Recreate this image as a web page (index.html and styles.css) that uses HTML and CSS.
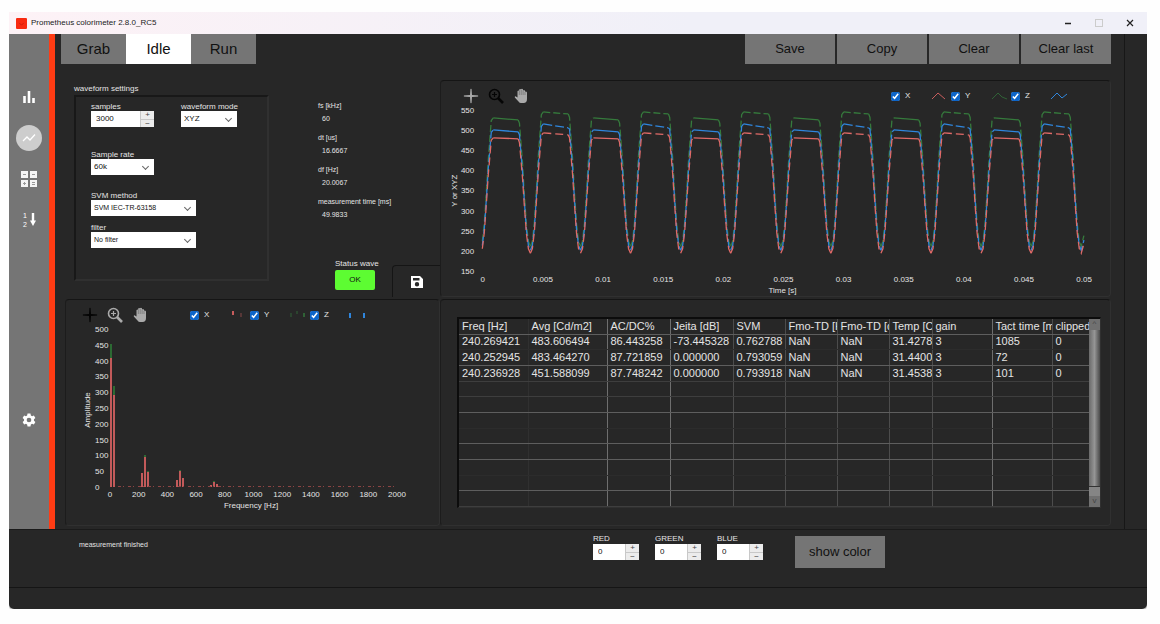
FILE: index.html
```html
<!DOCTYPE html>
<html lang="en">
<head>
<meta charset="utf-8">
<title>Prometheus colorimeter</title>
<link rel="stylesheet" href="styles.css">
</head>
<body>

<!-- shared icons -->
<svg class="defs" aria-hidden="true">
    <symbol id="i-cross" viewBox="0 0 16 16"><path d="M8 0L9 7L16 8L9 9L8 16L7 9L0 8L7 7Z" fill="currentColor"/><path d="M8 1V15M1 8H15" stroke="currentColor"/></symbol>
    <symbol id="i-zoom" viewBox="0 0 16 16"><circle cx="6.5" cy="6.5" r="5" fill="none" stroke="currentColor" stroke-width="1.6"/><path d="M6.5 4V9M4 6.5H9" stroke="currentColor" stroke-width="1.2"/><path d="M10 10L15 15" stroke="currentColor" stroke-width="2.6"/></symbol>
    <symbol id="i-hand" viewBox="0 0 16 16"><path d="M2.500 8.300L4.500 9.500V3.200Q5.300 2 6.200 3V1.600Q7.200 .4 8.100 1.600V1.200Q9.200 .2 10 1.600V2.400Q11.200 1.600 12 2.800V3.800Q13.300 3.200 14 4.400V11Q14 15 10.500 15H8Q6.500 15 5.500 13.500L1.800 9.500Q1.600 8.400 2.500 8.300Z" fill="currentColor"/><path d="M6.300 3V7M8.200 2V7M10.100 2.500V7M12 4V7" stroke="#555" stroke-width=".5"/></symbol>
</svg>

<div class="window">
    <header class="titlebar">
        <svg class="logo" viewBox="0 0 10 10"><rect width="10" height="10" rx="1" fill="#f8290f"/><path d="M3 4.500L5 6.500L7 4.500" fill="none" stroke="#c81a08" stroke-width=".8"/></svg>
        <span class="app-name">Prometheus colorimeter 2.8.0_RC5</span>
        <div class="win-buttons">
            <button aria-label="Minimize"><svg viewBox="0 0 10 10"><path d="M2 5.500H8" stroke="#222" stroke-width="1.400"/></svg></button>
            <button aria-label="Maximize"><svg viewBox="0 0 10 10"><rect x="1.500" y="1.500" width="7" height="7" fill="none" stroke="#ccc"/></svg></button>
            <button aria-label="Close"><svg viewBox="0 0 10 10"><path d="M2 2L8 8M8 2L2 8" stroke="#222" stroke-width="1.200"/></svg></button>
        </div>
    </header>

    <div class="main">
        <nav class="sidebar">
            <button aria-label="Bar view"><svg viewBox="0 0 14 14"><path d="M2.500 6V13M7 1V13M11.500 8V13" stroke="#fff" stroke-width="2.600"/></svg></button>
            <button class="active" aria-label="Waveform view"><svg viewBox="0 0 14 14"><path d="M1 10L5 6L8 9L13 3.500" fill="none" stroke="#fff" stroke-width="1.300"/></svg></button>
            <button aria-label="Calculator view"><svg class="wide" viewBox="0 0 16 16"><path d="M0 0H7V7H0ZM9 0H16V7H9ZM0 9H7V16H0ZM9 9H16V16H9Z" fill="#f4f4f4"/><path d="M2 3.500H5M11 3.500H14M2 12.500H5M3.500 11V14M11 11.500H14M11 13.500H14" stroke="#999" stroke-width="1"/></svg></button>
            <button aria-label="Order view"><svg class="wide" viewBox="0 0 16 16"><text x="2" y="6" class="icon-digit">1</text><text x="2" y="15" class="icon-digit">2</text><path d="M12 1V10" stroke="#fff" stroke-width="2.400"/><path d="M9 8.500H15L12 14Z" fill="#fff"/></svg></button>
            <button class="settings" aria-label="Settings"><svg viewBox="0 0 24 24"><path fill="#fff" fill-rule="evenodd" d="M9.500 1H14.500L15.200 4.200L17.300 5.400L20.400 4.300L22.900 8.700L20.500 10.900V13.100L22.900 15.300L20.400 19.700L17.300 18.600L15.200 19.800L14.500 23H9.500L8.800 19.800L6.700 18.600L3.600 19.700L1.100 15.300L3.500 13.100V10.900L1.100 8.700L3.600 4.300L6.700 5.400L8.800 4.200ZM12 8A4 4 0 1 0 12 16A4 4 0 1 0 12 8Z"/></svg></button>
        </nav>

        <div class="workspace">
            <div class="toolbar">
                <div class="modes">
                    <button>Grab</button>
                    <button class="selected">Idle</button>
                    <button>Run</button>
                </div>
                <div class="actions">
                    <button>Save</button>
                    <button>Copy</button>
                    <button>Clear</button>
                    <button>Clear last</button>
                </div>
            </div>

            <div class="panels">
                <section class="setup">
                    <div class="settings-group">
                        <h2>waveform settings</h2>
                        <form class="settings-box">
                            <div class="field-row">
                                <div class="field samples">
                                    <label for="samples">samples</label>
                                    <div class="spin"><input id="samples" type="text" inputmode="numeric" value="3000"><span class="arrows"><button type="button" aria-label="Up">+</button><button type="button" aria-label="Down">−</button></span></div>
                                </div>
                                <div class="field mode">
                                    <label for="mode">waveform mode</label>
                                    <div class="drop"><select id="mode"><option>XYZ</option></select></div>
                                </div>
                            </div>
                            <div class="field rate">
                                <label for="rate">Sample rate</label>
                                <div class="drop"><select id="rate"><option>60k</option></select></div>
                            </div>
                            <div class="field svm">
                                <label for="svm">SVM method</label>
                                <div class="drop"><select id="svm"><option>SVM IEC-TR-63158</option></select></div>
                            </div>
                            <div class="field filter">
                                <label for="filter">filter</label>
                                <div class="drop"><select id="filter"><option>No filter</option></select></div>
                            </div>
                        </form>
                    </div>
                    <div class="readout">
                        <dl>
                            <dt>fs [kHz]</dt><dd>60</dd>
                            <dt>dt [us]</dt><dd>16.6667</dd>
                            <dt>df [Hz]</dt><dd>20.0067</dd>
                            <dt>measurement time [ms]</dt><dd>49.9833</dd>
                        </dl>
                        <div class="status-row">
                            <div class="status">
                                <span>Status wave</span>
                                <button>OK</button>
                            </div>
                            <button class="disk" aria-label="Save settings"><svg viewBox="0 0 14 14"><path fill="#fff" fill-rule="evenodd" d="M1 1H10L13 4V13H1ZM3 3V5.500H9.500V3ZM7 7A2.200 2.200 0 1 0 7 11.400A2.200 2.200 0 1 0 7 7Z"/></svg></button>
                        </div>
                    </div>
                </section>

                <section class="panel wave-panel">
                    <div class="chart-head">
                        <div class="tools">
                            <button aria-label="Cursor"><svg><use href="#i-cross"/></svg></button>
                            <button class="on" aria-label="Zoom"><svg><use href="#i-zoom"/></svg></button>
                            <button aria-label="Pan"><svg><use href="#i-hand"/></svg></button>
                        </div>
                        <div class="legend">
                            <label><input type="checkbox" checked>X<svg class="x" viewBox="0 0 18 10"><path d="M2 8L8 2L15 8"/></svg></label>
                            <label><input type="checkbox" checked>Y<svg class="y" viewBox="0 0 18 10"><path d="M2 8L8 2L12 6L17 8"/></svg></label>
                            <label><input type="checkbox" checked>Z<svg class="z" viewBox="0 0 18 10"><path d="M1 8L7 2L12 7L17 3"/></svg></label>
                        </div>
                    </div>
                    <svg id="wave" class="chart" viewBox="0 0 672 192"></svg>
                </section>

                <section class="panel fft-panel">
                    <div class="chart-head">
                        <div class="tools">
                            <button class="on" aria-label="Cursor"><svg><use href="#i-cross"/></svg></button>
                            <button aria-label="Zoom"><svg><use href="#i-zoom"/></svg></button>
                            <button aria-label="Pan"><svg><use href="#i-hand"/></svg></button>
                        </div>
                        <div class="legend">
                            <label><input type="checkbox" checked>X<svg class="x" viewBox="0 0 18 10"><path d="M4 1V5"/><path d="M12 3V7" opacity=".3"/></svg></label>
                            <label><input type="checkbox" checked>Y<svg class="y" viewBox="0 0 18 10"><path d="M2 3V7M8 1V4" opacity=".5"/><path d="M15 3V7"/></svg></label>
                            <label><input type="checkbox" checked>Z<svg class="z" viewBox="0 0 18 10"><path d="M1 3V8M15 3V8"/></svg></label>
                        </div>
                    </div>
                    <svg id="fft" class="chart" viewBox="0 0 373 200"></svg>
                </section>

                <section class="panel table-panel">
                    <div class="table-wrap">
                        <div class="table-body">
                            <table>
                                <colgroup>
                                    <col class="c-freq"><col class="c-avg"><col class="c-acdc"><col class="c-acdc"><col class="c-td"><col class="c-td"><col class="c-td"><col class="c-temp"><col class="c-gain"><col class="c-gain"><col class="c-clip">
                                </colgroup>
                                <thead>
                                    <tr><th>Freq [Hz]</th><th>Avg [Cd/m2]</th><th>AC/DC%</th><th>Jeita [dB]</th><th>SVM</th><th>Fmo-TD [Hz]</th><th>Fmo-TD [dB]</th><th>Temp [C]</th><th>gain</th><th>Tact time [ms]</th><th>clipped</th></tr>
                                </thead>
                                <tbody>
                                    <tr class="soft"><td>240.269421</td><td>483.606494</td><td>86.443258</td><td>-73.445328</td><td>0.762788</td><td>NaN</td><td>NaN</td><td>31.42786</td><td>3</td><td>1085</td><td>0</td></tr>
                                    <tr><td>240.252945</td><td>483.464270</td><td>87.721859</td><td>0.000000</td><td>0.793059</td><td>NaN</td><td>NaN</td><td>31.44006</td><td>3</td><td>72</td><td>0</td></tr>
                                    <tr class="dim"><td>240.236928</td><td>451.588099</td><td>87.748242</td><td>0.000000</td><td>0.793918</td><td>NaN</td><td>NaN</td><td>31.45386</td><td>3</td><td>101</td><td>0</td></tr>
                                    <tr class="dim"><td></td><td></td><td></td><td></td><td></td><td></td><td></td><td></td><td></td><td></td><td></td></tr>
                                    <tr><td></td><td></td><td></td><td></td><td></td><td></td><td></td><td></td><td></td><td></td><td></td></tr>
                                    <tr class="soft"><td></td><td></td><td></td><td></td><td></td><td></td><td></td><td></td><td></td><td></td><td></td></tr>
                                    <tr><td></td><td></td><td></td><td></td><td></td><td></td><td></td><td></td><td></td><td></td><td></td></tr>
                                    <tr><td></td><td></td><td></td><td></td><td></td><td></td><td></td><td></td><td></td><td></td><td></td></tr>
                                    <tr class="soft"><td></td><td></td><td></td><td></td><td></td><td></td><td></td><td></td><td></td><td></td><td></td></tr>
                                    <tr><td></td><td></td><td></td><td></td><td></td><td></td><td></td><td></td><td></td><td></td><td></td></tr>
                                    <tr class="dim"><td></td><td></td><td></td><td></td><td></td><td></td><td></td><td></td><td></td><td></td><td></td></tr>
                                </tbody>
                            </table>
                        </div>
                        <div class="scrollbar"><span class="cap">^</span><span class="thumb"></span><span class="cap">v</span></div>
                    </div>
                </section>
            </div>
        </div>
        <div class="gutter"></div>
    </div>

    <footer class="footer">
        <p class="message">measurement finished</p>
        <div class="field">
            <label for="red">RED</label>
            <div class="spin small"><input id="red" type="text" inputmode="numeric" value="0"><span class="arrows"><button aria-label="Up">+</button><button aria-label="Down">−</button></span></div>
        </div>
        <div class="field">
            <label for="green">GREEN</label>
            <div class="spin small"><input id="green" type="text" inputmode="numeric" value="0"><span class="arrows"><button aria-label="Up">+</button><button aria-label="Down">−</button></span></div>
        </div>
        <div class="field">
            <label for="blue">BLUE</label>
            <div class="spin small"><input id="blue" type="text" inputmode="numeric" value="0"><span class="arrows"><button aria-label="Up">+</button><button aria-label="Down">−</button></span></div>
        </div>
        <button class="show-color">show color</button>
    </footer>
    <div class="bottom-strip"></div>
</div>

<script src="charts.js"></script>
</body>
</html>
```

FILE: styles.css
```css
* {
    box-sizing: border-box;
}

body {
    background: #fefefe;
    color: #e4e4e4;
    font-family: "Liberation Sans", Arial, sans-serif;
    font-size: 8px;
    line-height: 10px;
    margin: 12px 13px 12px 9px;
}

button, input, select {
    font: inherit;
    margin: 0;
    padding: 0;
    border: none;
    border-radius: 0;
}

button {
    color: #111;
    background: none;
    cursor: pointer;
}

h2, p, dl, dd {
    margin: 0;
    font-size: 8px;
    font-weight: normal;
}

svg {
    display: block;
}

.defs {
    display: none;
}

.window {
    background: #272727;
    border-radius: 0 0 5px 5px;
    overflow: hidden;
    box-shadow: 0 0 1px 1px #bbb;
}

/* title bar */
.titlebar {
    display: flex;
    align-items: center;
    height: 22px;
    padding: 0 2px 0 7px;
    background: linear-gradient(90deg, #fdf2f6, #f0f0f8 60%);
    color: #222;
}

.logo {
    width: 11px;
    height: 11px;
    margin-right: 4px;
}

.win-buttons {
    display: flex;
    margin-left: auto;
}

.win-buttons button {
    width: 31px;
    display: flex;
    justify-content: center;
}

.win-buttons svg {
    width: 10px;
    height: 10px;
}

.main {
    display: flex;
}

/* left navigation */
.sidebar {
    display: flex;
    flex-direction: column;
    align-items: center;
    gap: 15px;
    width: 46px;
    padding: 50px 0 96px;
    background: #757575;
    border-right: 6px solid #ff3c14;
}

.sidebar button {
    display: flex;
    align-items: center;
    justify-content: center;
    width: 26px;
    height: 26px;
    border-radius: 50%;
}

.sidebar .active {
    background: #cdcdcd;
}

.sidebar svg {
    width: 14px;
    height: 14px;
}

.sidebar .wide {
    width: 16px;
    height: 16px;
}

.sidebar .settings {
    margin-top: auto;
}

.icon-digit {
    font-size: 7px;
    fill: #fff;
}

.workspace {
    flex: 1;
    min-width: 0;
    padding: 0 13px 3px 6px;
}

.gutter {
    width: 23px;
    border-left: 1px solid #171717;
}

.toolbar {
    display: flex;
    justify-content: space-between;
    height: 30px;
    margin-bottom: 16px;
}

.modes, .actions {
    display: flex;
}

.modes button {
    width: 65px;
    background: #757575;
    font-size: 15px;
}

.modes .selected {
    background: #fff;
}

.actions {
    gap: 2px;
}

.actions button {
    width: 90px;
    background: #757575;
    font-size: 13px;
}

.panels {
    display: grid;
    grid-template-columns: 379fr 671fr;
    row-gap: 2px;
}

.panel {
    border: 1px solid #303030;
    border-top-color: #151515;
    border-left-color: #1c1c1c;
    border-radius: 4px;
    min-width: 0;
}

.fft-panel {
    margin-left: 4px;
}

/* waveform settings */
.setup {
    display: flex;
    padding-left: 13px;
}

.settings-group {
    width: 195px;
    padding-top: 4px;
}

.settings-box {
    margin-top: 1px;
    height: 186px;
    padding: 5px 0 0 15px;
    border: 2px solid #303030;
    border-top-color: #181818;
    border-left-color: #181818;
}

.field-row {
    display: flex;
    gap: 27px;
}

.field label {
    display: block;
    height: 9px;
    line-height: 9px;
    white-space: nowrap;
}

.samples, .rate {
    width: 63px;
}

.mode {
    width: 56px;
}

.svm, .filter {
    width: 105px;
}

.rate {
    margin-top: 23px;
}

.svm {
    margin-top: 16px;
}

.filter {
    margin-top: 7px;
}

.spin {
    display: flex;
    height: 16px;
    background: #fff;
}

.spin.small {
    width: 46px;
}

.spin input {
    flex: 1;
    min-width: 0;
    padding-left: 5px;
    color: #111;
    background: none;
}

.arrows {
    display: flex;
    flex-direction: column;
    width: 14px;
    border-left: 1px solid #c8c8c8;
    background: #ececec;
}

.arrows button {
    flex: 1;
    line-height: 8px;
    color: #444;
}

.arrows button + button {
    border-top: 1px solid #c8c8c8;
    line-height: 6px;
}

.drop {
    position: relative;
    height: 16px;
    background: #fff;
}

.drop select {
    appearance: none;
    width: 100%;
    height: 100%;
    padding-left: 3px;
    color: #111;
    background: none;
}

.drop::after {
    content: "";
    position: absolute;
    right: 6px;
    top: 5px;
    width: 4px;
    height: 4px;
    border-right: 1px solid #666;
    border-bottom: 1px solid #666;
    transform: rotate(45deg);
    pointer-events: none;
}

#svm, #filter {
    font-size: 7px;
}

/* measured values */
.readout {
    flex: 1;
    display: flex;
    flex-direction: column;
    justify-content: space-between;
    padding-top: 19px;
}

.readout dl {
    padding-left: 49px;
}

.readout dt {
    font-size: 7px;
    line-height: 13px;
    white-space: nowrap;
}

.readout dd {
    font-size: 7px;
    line-height: 13px;
    padding-left: 4px;
    margin-bottom: 6px;
}

.status-row {
    display: flex;
    justify-content: flex-end;
    gap: 17px;
}

.status {
    width: 40px;
    margin-top: -6px;
}

.status span {
    display: block;
    height: 11px;
    white-space: nowrap;
}

.status button {
    display: block;
    width: 40px;
    height: 20px;
    background: #5dfc32;
    border-radius: 2px;
}

.disk {
    display: flex;
    align-items: center;
    justify-content: center;
    width: 48px;
    height: 32px;
    border-top: 1px solid #151515;
    border-left: 1px solid #151515;
    border-radius: 4px 0 0 0;
}

.disk svg {
    width: 14px;
    height: 14px;
}

/* charts */
.chart-head {
    display: flex;
    justify-content: space-between;
    height: 24px;
    padding: 6px 39px 0 22px;
}

.fft-panel .chart-head {
    padding: 6px 69px 0 16px;
}

.tools {
    display: flex;
    gap: 9px;
}

.tools button {
    color: #aaa;
}

.tools .on {
    color: #050505;
}

.tools svg {
    width: 16px;
    height: 16px;
}

.legend {
    display: flex;
}

.legend label {
    display: flex;
    align-items: center;
    width: 60px;
    height: 18px;
}

.legend input {
    width: 9px;
    height: 9px;
    margin-right: 5px;
    accent-color: #0d65c9;
}

.legend svg {
    width: 18px;
    height: 10px;
    margin-left: auto;
    margin-right: 3px;
    fill: none;
}

.fft-panel .legend svg {
    stroke-width: 2;
}

.legend .x {
    stroke: #c85c5c;
}

.legend .y {
    stroke: #2f6236;
}

.legend .z {
    stroke: #2f86dd;
}

.chart {
    width: 100%;
    font-size: 8px;
}

.chart text {
    fill: #e4e4e4;
}

.mid {
    text-anchor: middle;
}

.line {
    fill: none;
    stroke-width: 1.3;
}

.line.x {
    stroke: #e06a68;
}

.line.y {
    stroke: #357a3c;
}

.line.z {
    stroke: #2f86dd;
}

.line.x.dashed {
    stroke-dasharray: 8 4;
}

.line.y.dashed {
    stroke-dasharray: 7 3;
}

.line.z.dashed {
    stroke-dasharray: 9 3;
}

.bar-x {
    fill: #c25a5a;
}

.bar-y {
    fill: #2c6a33;
}

.floor {
    stroke: #8d4444;
    stroke-dasharray: 3 2 1 4;
}

/* results table */
.table-panel {
    padding: 17px 9px 17px 16px;
}

.table-wrap {
    display: flex;
    height: 191px;
    border: 1px solid #303030;
    border-top: 2px solid #0c0c0c;
    border-left: 2px solid #0c0c0c;
}

.table-body {
    flex: 1;
    min-width: 0;
    overflow: hidden;
}

table {
    width: 100%;
    height: 188px;
    table-layout: fixed;
    border-collapse: collapse;
    font-size: 11px;
    line-height: 13px;
}

th, td {
    height: 15px;
    padding: 0 0 0 3px;
    font-weight: normal;
    text-align: left;
    white-space: nowrap;
    overflow: hidden;
    border-right: 1px solid #4c4c4c;
    border-bottom: 1px solid #5e5e5e;
}

th:nth-child(2), td:nth-child(2),
th:nth-child(3), td:nth-child(3),
th:nth-child(9), td:nth-child(9) {
    border-right-color: #6e6e6e;
}

th:first-child, td:first-child {
    border-right-color: #303030;
}

.soft td {
    border-bottom-color: #2c2c2c;
}

.dim td {
    border-bottom-color: #3e3e3e;
}

.c-freq { width: 69px; }
.c-avg { width: 79px; }
.c-acdc { width: 63px; }
.c-td { width: 52px; }
.c-temp { width: 43px; }
.c-gain { width: 60px; }
.c-clip { width: 41px; }

.scrollbar {
    display: flex;
    flex-direction: column;
    width: 11px;
    background: linear-gradient(90deg, #6a6a6a, #959595 50%, #4a4a4a);
}

.cap {
    height: 11px;
    background: #707070;
    color: #444;
    text-align: center;
}

.thumb {
    height: 10px;
    margin-top: auto;
    background: #858585;
    border-top: 1px solid #333;
}

/* footer */
.footer {
    display: flex;
    gap: 16px;
    height: 58px;
    padding: 4px 262px 0 70px;
    border-top: 1px solid #1a1a1a;
}

.message {
    margin-right: auto;
    padding-top: 6px;
    font-size: 7px;
}

.footer .field label {
    height: 10px;
}

.show-color {
    width: 90px;
    height: 32px;
    margin: 2px 0 0 16px;
    background: #757575;
    font-size: 13px;
}

.bottom-strip {
    height: 22px;
    border-top: 1px solid #151515;
}
```

FILE: charts.js
```js
const NS = 'http://www.w3.org/2000/svg';

function add(parent, tag, attrs, text) {
    const el = document.createElementNS(NS, tag);
    for (const key in attrs) {
        el.setAttribute(key, attrs[key]);
    }
    if (text !== undefined) {
        el.textContent = text;
    }
    parent.appendChild(el);
}

function drawWave() {
    const svg = document.getElementById('wave');
    const period = 50.3;

    for (let v = 150; v <= 550; v += 50) {
        add(svg, 'text', { x: 20, y: 8 + (550 - v) * 0.404 }, v);
    }
    for (let i = 0; i <= 10; i++) {
        add(svg, 'text', { x: 42 + i * 60.4, y: 178, class: 'mid' }, String(i * 5 / 1000));
    }
    add(svg, 'text', { x: 343, y: 189, class: 'mid' }, 'Time [s]');
    add(svg, 'text', { class: 'mid', transform: 'translate(16 86) rotate(-90)' }, 'Y or XYZ');

    // plateau start/end heights for even and odd pulses, and valley depth
    const series = [
        { name: 'y', even: [13, 15], odd: [7, 9], valley: 142 },
        { name: 'z', even: [25, 27], odd: [19, 23], valley: 146 },
        { name: 'x', even: [33, 34], odd: [28, 30], valley: 149 }
    ];

    series.forEach(s => {
        for (let k = 0; k < 12; k++) {
            const x0 = 39.5 + k * period;
            const top = k % 2 ? s.odd : s.even;
            const depth = s.valley - top[0];
            const at = (dx, f) => (x0 + dx).toFixed(1) + ',' + (s.valley - depth * f).toFixed(1);
            const rise = [k ? at(0, 0) : '', at(2, 0.04), at(4, 0.18), at(6, 0.42), at(8, 0.68), at(10, 0.88), at(11, 0.98)].join(' ');
            const fall = [at(39.3, 0.96), at(40.3, 0.86), at(42.3, 0.66), at(44.3, 0.4), at(46.3, 0.17), at(48.3, 0.04), at(50.3, 0)].join(' ');
            const a = (x0 + 13).toFixed(1) + ',' + top[0];
            const b = (x0 + 38).toFixed(1) + ',' + top[1];
            const last = k === 11 ? ' ' + at(53, 0.08) : '';
            add(svg, 'polyline', { points: rise + ' ' + a, class: 'line dashed ' + s.name });
            add(svg, 'polyline', { points: a + ' ' + b, class: 'line ' + (k % 2 ? 'dashed ' : '') + s.name });
            add(svg, 'polyline', { points: b + ' ' + fall + last, class: 'line dashed ' + s.name });
        }
    });
}

function drawFft() {
    const svg = document.getElementById('fft');
    const base = 163;

    for (let v = 0; v <= 500; v += 50) {
        add(svg, 'text', { x: 29, y: 166 - v * 0.316 }, v);
    }
    for (let f = 0; f <= 2000; f += 200) {
        add(svg, 'text', { x: 44 + f * 0.1435, y: 173, class: 'mid' }, f);
    }
    add(svg, 'text', { x: 185, y: 184, class: 'mid' }, 'Frequency [Hz]');
    add(svg, 'text', { class: 'mid', transform: 'translate(24 86) rotate(-90)' }, 'Amplitude');

    // x position, X height, Y height
    const bars = [
        [44, 129, 143], [47, 92, 101],
        [75, 14, 14], [78, 30, 32], [81, 15, 16],
        [110, 7, 7], [113, 16, 17], [116, 9, 9],
        [144, 2, 2], [147, 5, 6], [150, 3, 3]
    ];
    bars.forEach(([x, hx, hy]) => {
        add(svg, 'rect', { x: x, y: base - hy, width: 2, height: hy, class: 'bar-y' });
        add(svg, 'rect', { x: x, y: base - hx, width: 2, height: hx, class: 'bar-x' });
    });
    add(svg, 'line', { x1: 52, y1: base - 0.5, x2: 331, y2: base - 0.5, class: 'floor' });
}

drawWave();
drawFft();
```
